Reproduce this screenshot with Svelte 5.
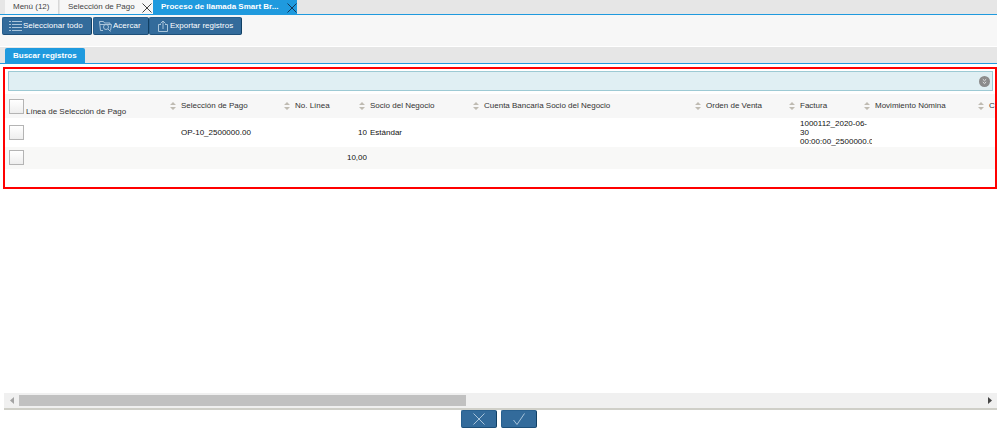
<script>
  const tabs = [
    { label: 'Menú (12)', width: 54, closable: false },
    { label: 'Selección de Pago', width: 93, closable: true },
    { label: 'Proceso de llamada Smart Br...', width: 144, closable: true }
  ];
  let activeTab = $state(2);

  const columns = [
    { label: 'Línea de Selección de Pago', width: 173 },
    { label: 'Selección de Pago', width: 114 },
    { label: 'No. Línea', width: 75, numeric: true },
    { label: 'Socio del Negocio', width: 114 },
    { label: 'Cuenta Bancaria Socio del Negocio', width: 222 },
    { label: 'Orden de Venta', width: 94 },
    { label: 'Factura', width: 75 },
    { label: 'Movimiento Nómina', width: 114 },
    { label: 'C', width: 40 }
  ];

  const rows = [
    ['OP-10_2500000.00', '10', 'Estándar', '', '', '1000112_2020-06-30 00:00:00_2500000.0', '', ''],
    ['', '10,00', '', '', '', '', '', '']
  ];

  let selected = $state([false, false]);

  function toggleAll() {
    const value = !selected.every(Boolean);
    selected = selected.map(() => value);
  }
</script>

<div class="window">
  <nav class="tabs">
    {#each tabs as tab, i}
      <div class="tab" class:active={activeTab === i} style="width: {tab.width}px">
        <button class="label" onclick={() => (activeTab = i)}>{tab.label}</button>
        {#if tab.closable}
          <button class="close" aria-label="Cerrar">
            <svg viewBox="0 0 10 10" width="10" height="10"><path d="M.5.5l9 9M9.5.5l-9 9" /></svg>
          </button>
        {/if}
      </div>
    {/each}
  </nav>

  <div class="toolbar">
    <button class="action select" onclick={toggleAll}>
      <svg viewBox="0 0 13 12" width="13" height="12">
        <path d="M0 1.5h2M0 4.5h2M0 7.5h2M0 10.5h2M3 1.5h10M3 4.5h10M3 7.5h10M3 10.5h10" />
      </svg>
      <span>Seleccionar todo</span>
    </button>
    <button class="action zoom">
      <svg viewBox="0 0 13 12" width="13" height="12">
        <path d="M4 10.5H1.5L.5 1.5h4l1 1.5H11v1M1 4.5h11.5l-1 6" />
        <circle cx="7" cy="7" r="2.5" />
        <path d="M9 9l2.5 2.5" />
      </svg>
      <span>Acercar</span>
    </button>
    <button class="action export">
      <svg viewBox="0 0 12 12" width="12" height="12">
        <path d="M4 4.5H1.5v7h9v-7H8M6 9V1M3.5 3.5L6 1l2.5 2.5" />
      </svg>
      <span>Exportar registros</span>
    </button>
  </div>

  <div class="subtabs">
    <button class="subtab">Buscar registros</button>
  </div>

  <main>
    <section class="results">
      <div class="filter">
        <button class="expand" aria-label="Mostrar filtros">
          <svg viewBox="0 0 11 11" width="11" height="11">
            <circle cx="5.5" cy="5.5" r="5.5" />
            <path d="M3.8 3.2l1.7 1.6 1.7-1.6M3.8 6l1.7 1.6L7.2 6" />
          </svg>
        </button>
      </div>
      <div class="grid">
        <table>
          <colgroup>
            {#each columns as column}
              <col style="width: {column.width}px" />
            {/each}
          </colgroup>
          <thead>
            <tr>
              {#each columns as column, i}
                <th>
                  <div class="head" class:first={i === 0}>
                    {#if i === 0}
                      <input
                        type="checkbox"
                        aria-label="Seleccionar todo"
                        checked={selected.every(Boolean)}
                        onchange={toggleAll} />
                    {/if}
                    <span>{column.label}</span>
                    <svg class="sort" viewBox="0 0 6 8" width="6" height="8">
                      <path d="M0 3L3 0l3 3zM0 5l3 3 3-3z" />
                    </svg>
                  </div>
                </th>
              {/each}
            </tr>
          </thead>
          <tbody>
            {#each rows as row, r}
              <tr>
                <td>
                  <input type="checkbox" aria-label="Fila {r + 1}" bind:checked={selected[r]} />
                </td>
                {#each row as cell, c}
                  <td class:numeric={columns[c + 1].numeric}>{cell}</td>
                {/each}
              </tr>
            {/each}
          </tbody>
        </table>
      </div>
    </section>

    <div class="scrollbar">
      <button class="arrow" aria-label="Izquierda">
        <svg viewBox="0 0 4 7" width="4" height="7"><path d="M4 0v7L0 3.5z" /></svg>
      </button>
      <div class="track"><div class="thumb"></div></div>
      <button class="arrow end" aria-label="Derecha">
        <svg viewBox="0 0 4 7" width="4" height="7"><path d="M0 0v7l4-3.5z" /></svg>
      </button>
    </div>
  </main>

  <footer>
    <button class="action confirm" aria-label="Cancelar">
      <svg viewBox="0 0 12 12" width="12" height="12"><path d="M.5.5l11 11M11.5.5l-11 11" /></svg>
    </button>
    <button class="action confirm" aria-label="Aceptar">
      <svg viewBox="0 0 12 12" width="12" height="12"><path d="M.5 7L4 11.5 11.5.5" /></svg>
    </button>
  </footer>
</div>

<style>
  :global(body) {
    margin: 0;
    background: #fff;
  }

  .window {
    display: flex;
    flex-direction: column;
    min-height: 100vh;
    overflow: hidden;
    font-family: "Liberation Sans", Arial, sans-serif;
    font-size: 8px;
    line-height: 9px;
    color: #333;
  }

  button {
    margin: 0;
    padding: 0;
    border: 0;
    background: none;
    font: inherit;
    color: inherit;
    white-space: nowrap;
  }

  svg {
    display: block;
    flex: none;
    fill: none;
    stroke: currentColor;
  }

  .tabs {
    display: flex;
    height: 14px;
    padding-left: 5px;
    background: #e6e6e6;
    border-bottom: 1px solid #1f9ade;
  }

  .tab {
    display: flex;
    box-sizing: border-box;
    justify-content: space-between;
    padding-left: 8px;
    background: #f7f7f7;
    color: #444;
  }

  .tab:first-child {
    border-right: 1px solid #d8d8d8;
    margin-right: 1px;
  }

  .tab .label {
    height: 13px;
  }

  .tab .close {
    padding: 2px 1px 0 0;
  }

  .tab.active {
    background: #1f9ade;
    color: #fff;
    font-weight: bold;
  }

  .tab.active .close {
    padding-right: 0;
    color: #14385a;
  }

  .toolbar {
    display: flex;
    align-items: flex-start;
    height: 29px;
    padding: 2px 2px 0;
    background: #f7f7f7;
    border-bottom: 1px solid #fff;
  }

  .action {
    display: flex;
    box-sizing: border-box;
    align-items: center;
    gap: 1px;
    height: 18px;
    padding: 0 6px;
    border: 1px solid #28608f;
    border-right-color: #103f63;
    border-bottom-color: #1d4f79;
    border-radius: 2px;
    background: #336b9b;
    color: #fff;
  }

  .action span {
    padding-bottom: 2px;
  }

  .action svg {
    color: #a9c4da;
  }

  .select {
    width: 90px;
    margin-right: 1px;
  }

  .zoom {
    width: 56px;
    padding: 0 5px;
  }

  .export {
    width: 93px;
    padding-left: 7px;
  }

  .subtabs {
    display: flex;
    height: 15px;
    padding: 1px 5px 0;
    background: #e6e6e6;
    border-bottom: 1px solid #1f9ade;
  }

  .subtab {
    padding: 0 8px;
    border-radius: 2px 2px 0 0;
    background: #1f9ade;
    color: #fff;
    font-weight: bold;
  }

  main {
    display: flex;
    flex: 1;
    flex-direction: column;
    justify-content: space-between;
    padding-top: 3px;
  }

  .results {
    margin-left: 3px;
    padding-bottom: 18px;
    border: 2px solid #f00;
  }

  .filter {
    display: flex;
    box-sizing: border-box;
    align-items: center;
    justify-content: flex-end;
    height: 20px;
    margin: 2px 2px 3px 3px;
    padding-right: 2px;
    border: 1px solid #9dcad4;
    background: #e0eff3;
  }

  .expand circle {
    fill: #8b8b8b;
    stroke: none;
  }

  .expand {
    color: #e6e6e6;
  }

  .grid {
    overflow: hidden;
  }

  table {
    width: 1021px;
    table-layout: fixed;
    border-collapse: collapse;
  }

  th,
  td {
    padding: 0 0 0 3px;
    overflow: hidden;
    text-align: left;
    vertical-align: middle;
    font-weight: normal;
  }

  th {
    height: 24px;
    background: #f7f7f7;
    color: #333;
    white-space: nowrap;
  }

  .head {
    display: flex;
    align-items: center;
    padding-right: 2px;
  }

  .head span {
    padding-bottom: 2px;
  }

  .head.first span {
    align-self: flex-end;
    margin: 0 0 -2px 2px;
    padding: 0;
  }

  .sort {
    margin-left: auto;
    fill: #bfbbb2;
    stroke: none;
  }

  td {
    height: 22px;
    color: #111;
  }

  tbody tr:first-child td {
    height: 29px;
  }

  tbody tr:nth-child(even) {
    background: #f8f8f7;
  }

  tbody tr:nth-child(even) td {
    height: 20px;
    padding-bottom: 2px;
  }

  .numeric {
    text-align: right;
  }

  input[type="checkbox"] {
    appearance: none;
    display: block;
    flex: none;
    box-sizing: border-box;
    width: 15px;
    height: 15px;
    margin: 0 0 0 1px;
    border: 1px solid #b4b4b4;
    background: linear-gradient(#fff, #eee);
  }

  input[type="checkbox"]:checked {
    background: #336b9b;
  }

  .scrollbar {
    display: flex;
    height: 15px;
    margin-left: 4px;
    border-bottom: 2px solid #cfcfc8;
    background: #f0f0f0;
  }

  .arrow {
    display: flex;
    align-items: center;
    justify-content: center;
    width: 15px;
    color: #a3a3a3;
  }

  .arrow svg {
    fill: currentColor;
    stroke: none;
  }

  .arrow.end {
    color: #444;
  }

  .track {
    flex: 1;
    padding: 2px 0;
  }

  .thumb {
    width: 46.4%;
    height: 11px;
    background: #c1c1c1;
  }

  footer {
    display: flex;
    justify-content: center;
    gap: 4px;
    padding-bottom: 3px;
  }

  .confirm {
    justify-content: center;
    width: 36px;
  }
</style>
